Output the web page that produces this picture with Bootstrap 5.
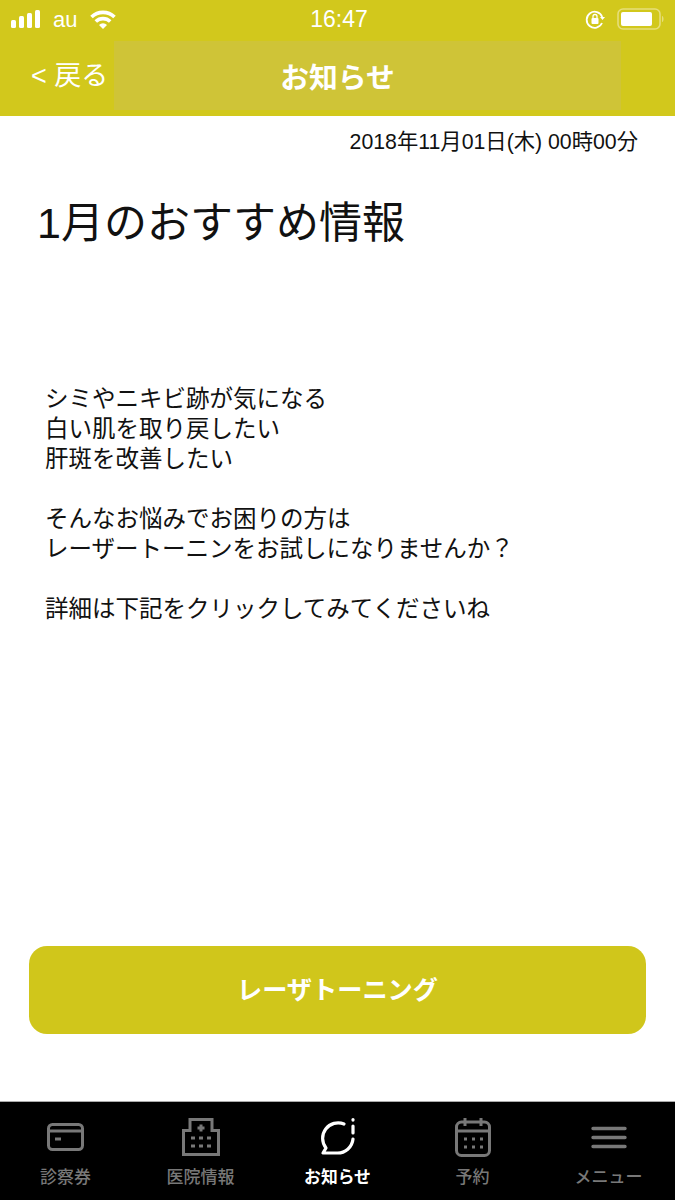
<!DOCTYPE html>
<html lang="ja"><head><meta charset="utf-8">
<link rel="stylesheet" href="https://cdn.jsdelivr.net/npm/bootstrap@5.3.0/dist/css/bootstrap.min.css">
<style>
html,body{height:100%}
body{font-family:"Liberation Sans","Noto Sans CJK JP",sans-serif;color:#111;height:1200px;overflow:hidden}
.topbar{background:#d2c81c;color:#fff;height:116px}
.statusline{height:38px;padding:0 10px 0 11px;font-size:22px}
.st-left{width:200px;gap:13px}.st-time{font-size:23px;padding-left:2px}.st-right{width:200px;gap:11px}
.headline{height:78px;padding:3px 0 6px 31px}
.backlink{color:#fff;font-size:27px;text-decoration:none;width:83px;white-space:nowrap;line-height:1;margin-top:2px}
.titlebox{width:507px;background:#cfc437;font-size:28.8px;font-weight:700;padding:7px 60px 0 0}
.datestamp{font-size:21.3px;padding:12px 37px 0 0;line-height:28px}
.bigtitle{font-size:43px;font-weight:400;margin:41px 0 0 37px;line-height:52px}
.bodytext{font-size:23.5px;line-height:30px;margin:135px 0 0 45px}
.mainbox{height:985px}
.actionbtn{background:#d0c61b;color:#fff;font-size:25.2px;font-weight:700;width:617px;height:88px;border-radius:18px;border:0;margin:0 0 67px 29px;padding-top:8px}
.actionbtn:hover{background:#d0c61b;color:#fff}
.tabbar{background:#000;height:99px;border-top:1px solid #aaa}
.tabitem{color:#787878;font-size:17px;font-weight:500;width:135px;line-height:20px}
.tabitem.activetab{color:#fff;font-weight:700;font-size:16.8px}
.tabitem.shiftleft{padding-right:4px}
.tabitem.shiftright{padding-left:2px}
.tabicon{height:46px;margin-top:12px;margin-bottom:8px}
</style></head><body>
<div class="topbar">
 <div class="statusline d-flex align-items-center justify-content-between">
  <div class="st-left d-flex align-items-center">
   <svg width="29" height="18" viewBox="0 0 29 18"><g fill="#fff"><rect x="0" y="10" width="5" height="8" rx="1.5"/><rect x="8" y="6" width="5" height="12" rx="1.5"/><rect x="16" y="3" width="5" height="15" rx="1.5"/><rect x="24" y="0" width="5" height="18" rx="1.5"/></g></svg>
   <span>au</span>
   <svg width="26" height="19" viewBox="0 0 26 19" fill="none" stroke="#fff" stroke-width="3.6"><path d="M1.5 7a16.5 16.5 0 0 1 23 0"/><path d="M5.8 11.5a10.5 10.5 0 0 1 14.4 0"/><path d="M13 19l-4-4a5.6 5.6 0 0 1 8 0z" fill="#fff" stroke="none"/></svg>
  </div>
  <div class="st-time">16:47</div>
  <div class="st-right d-flex align-items-center justify-content-end">
   <svg width="21" height="21" viewBox="0 0 21 21" fill="none" stroke="#fff" stroke-width="1.8"><path d="M17.2 8A8 8 0 1 0 17 14"/><path d="M15 8h5l-2.5 3z" fill="#fff" stroke="none"/><rect x="6.5" y="9" width="7" height="6" rx="1" fill="#fff" stroke="none"/><path d="M8 9V7.5a2 2 0 0 1 4 0V9" stroke-width="1.3"/></svg>
   <svg width="48" height="22" viewBox="0 0 48 22"><rect x="1" y="1" width="42" height="20" rx="5" fill="none" stroke="#e6de7a" stroke-width="1.6"/><rect x="4" y="4" width="31" height="14" rx="2" fill="#fff"/><path d="M45 8v6c2 0 2-6 0-6z" fill="#e6de7a"/></svg>
  </div>
 </div>
 <div class="headline d-flex align-items-center">
  <a class="backlink" href="#">&lt; 戻る</a>
  <div class="titlebox h-100 d-flex align-items-center justify-content-center">お知らせ</div>
 </div>
</div>
<div class="mainbox d-flex flex-column">
 <div class="datestamp text-end">2018年11月01日(木) 00時00分</div>
 <h1 class="bigtitle">1月のおすすめ情報</h1>
 <p class="bodytext mb-0">シミやニキビ跡が気になる<br>白い肌を取り戻したい<br>肝斑を改善したい<br><br>そんなお悩みでお困りの方は<br>レーザートーニンをお試しになりませんか？<br><br>詳細は下記をクリックしてみてくださいね</p>
 <button type="button" class="btn actionbtn mt-auto">レーザトーニング</button>
</div>
<nav class="tabbar d-flex">
 <div class="tabitem shiftleft text-center"><div class="tabicon d-flex align-items-center justify-content-center"><svg width="37" height="28" viewBox="0 0 37 28" fill="none" stroke="#787878" stroke-width="3"><rect x="1.5" y="1.5" width="34" height="25" rx="4"/><path d="M1.5 8h34"/><path d="M8 16h6"/></svg></div>診察券</div>
 <div class="tabitem shiftleft text-center"><div class="tabicon d-flex align-items-center justify-content-center"><svg width="38" height="38" viewBox="0 0 38 38" fill="none" stroke="#787878" stroke-width="3"><path d="M1.5 36.500V12.500h6.500V1.500h22v11h6.500v24z"/><path d="M19 6.500v7M15.500 10h7" stroke-width="3"/><path d="M9 20h4M17 20h4M25 20h4M9 28h4M17 28h4M25 28h4" stroke-width="3"/></svg></div>医院情報</div>
 <div class="tabitem activetab text-center"><div class="tabicon d-flex align-items-center justify-content-center"><svg width="36" height="40" viewBox="0 0 36 40" fill="none" stroke="#fff" stroke-width="3.2" stroke-linecap="round" stroke-linejoin="round"><path d="M24 7A15.500 15.500 0 0 0 6 31L3 36H17A15.500 15.500 0 0 0 33 22"/><path d="M33 2.500v.6M33 9v7"/></svg></div>お知らせ</div>
 <div class="tabitem text-center"><div class="tabicon d-flex align-items-center justify-content-center"><svg width="36" height="40" viewBox="0 0 36 40" fill="none" stroke="#787878" stroke-width="3"><rect x="1.500" y="5" width="33" height="33.500" rx="5"/><path d="M1.500 14h33M10 1v8M26 1v8"/><path d="M9 22h3M17 22h3M25 22h3M9 30h3M17 30h3M25 30h3"/></svg></div>予約</div>
 <div class="tabitem shiftright text-center"><div class="tabicon d-flex align-items-center justify-content-center"><svg width="36" height="23" viewBox="0 0 36 23" fill="none" stroke="#787878" stroke-width="3.4" stroke-linecap="round"><path d="M2 2.500h32M2 11.500h32M2 20.500h32"/></svg></div>メニュー</div>
</nav>
<script src="https://cdn.jsdelivr.net/npm/bootstrap@5.3.0/dist/js/bootstrap.bundle.min.js"></script>
</body></html>
